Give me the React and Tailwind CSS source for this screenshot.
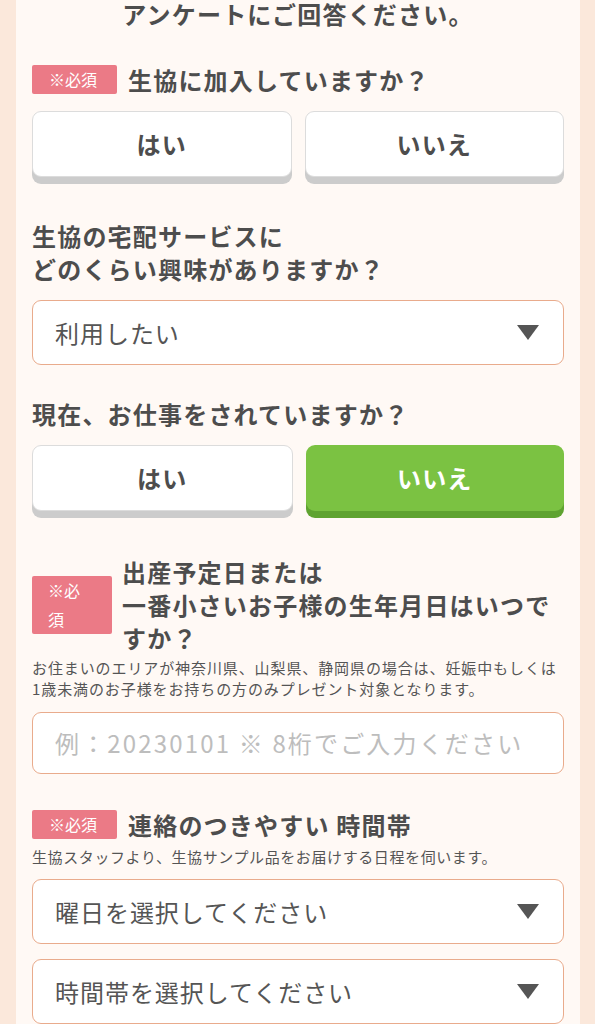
import React from "react";

const font = { fontFamily: '"Noto Sans CJK JP", "Noto Sans", sans-serif' };

function Badge({ children, className = "" }) {
  return (
    <div
      className={
        "bg-[#eb7a86] text-white text-[16px] leading-[29px] shrink-0 rounded-[2px] " +
        className
      }
    >
      {children}
    </div>
  );
}

function Choice({ label, active }) {
  return (
    <div
      className={
        "flex-1 h-[66px] rounded-[9px] flex items-center justify-center text-[24px] font-bold tracking-[0.05em] " +
        (active
          ? "bg-[#7bc242] text-white shadow-[0_7px_0_#5fa330]"
          : "bg-white text-[#4d4d4d] border border-[#dcdcdc] shadow-[0_7px_0_#cccccc]")
      }
    >
      {label}
    </div>
  );
}

function Triangle() {
  return (
    <svg width="22" height="15" viewBox="0 0 22 15" className="shrink-0">
      <polygon points="0,0 22,0 11,15" fill="#555555" />
    </svg>
  );
}

function Select({ text, className = "" }) {
  return (
    <div
      className={
        "h-[65px] bg-white border-[1.5px] border-[#e9ab8c] rounded-[9px] flex items-center justify-between pl-[22px] pr-[24px] " +
        className
      }
    >
      <span className="text-[24px] text-[#555555] tracking-[0.04em]">{text}</span>
      <Triangle />
    </div>
  );
}

export default function App() {
  return (
    <div className="min-h-[1024px] bg-[#fbe8db] pl-[16px] pr-[15px]" style={font}>
      <div className="bg-[#fff9f5] min-h-[1024px] px-[16px] pb-10 flex flex-col">
        <div className="text-center text-[24px] leading-[28px] font-bold text-[#4d4d4d] tracking-[0.05em]">
          アンケートにご回答ください。
        </div>

        <div className="mt-[37px] flex items-center gap-[11px]">
          <Badge className="pl-[17px] pr-[20px]">※必須</Badge>
          <div className="text-[24px] leading-[29px] font-bold text-[#4d4d4d] tracking-[0.05em]">
            生協に加入していますか？
          </div>
        </div>

        <div className="mt-[17px] flex gap-[13px]">
          <Choice label="はい" />
          <Choice label="いいえ" />
        </div>

        <div className="mt-[42px] text-[24px] leading-[33px] font-bold text-[#4d4d4d] tracking-[0.05em]">
          生協の宅配サービスに
          <br />
          どのくらい興味がありますか？
        </div>

        <Select text="利用したい" className="mt-[15px]" />

        <div className="mt-[32px] text-[24px] leading-[33px] font-bold text-[#4d4d4d] tracking-[0.05em]">
          現在、お仕事をされていますか？
        </div>

        <div className="mt-[15px] flex gap-[13px]">
          <Choice label="はい" />
          <Choice label="いいえ" active />
        </div>

        <div className="mt-[44px] flex items-center gap-[10px]">
          <Badge className="w-[80px] pl-[16px]">
            ※必
            <br />
            須
          </Badge>
          <div className="text-[24px] leading-[33px] font-bold text-[#4d4d4d] tracking-[0.05em]">
            出産予定日または
            <br />
            一番小さいお子様の生年月日はいつで
            <br />
            すか？
          </div>
        </div>

        <div className="mt-[3px] text-[15px] leading-[21px] text-[#555555] tracking-[0.06em]">
          お住まいのエリアが神奈川県、山梨県、静岡県の場合は、妊娠中もしくは
          <br />
          1歳未満のお子様をお持ちの方のみプレゼント対象となります。
        </div>

        <div className="mt-[13px] h-[62px] bg-white border-[1.5px] border-[#e9ab8c] rounded-[9px] flex items-center pl-[22px]">
          <span className="text-[24px] text-[#bdbdbd] tracking-[0.09em] whitespace-nowrap">
            例：20230101 ※ 8桁でご入力ください
          </span>
        </div>

        <div className="mt-[36px] flex items-center gap-[11px]">
          <Badge className="pl-[17px] pr-[20px]">※必須</Badge>
          <div className="text-[24px] leading-[28px] font-bold text-[#4d4d4d] tracking-[0.05em]">
            連絡のつきやすい 時間帯
          </div>
        </div>

        <div className="mt-[7px] text-[15px] leading-[21px] text-[#555555] tracking-[0.04em]">
          生協スタッフより、生協サンプル品をお届けする日程を伺います。
        </div>

        <Select text="曜日を選択してください" className="mt-[12px]" />
        <Select text="時間帯を選択してください" className="mt-[15px]" />
      </div>
    </div>
  );
}
